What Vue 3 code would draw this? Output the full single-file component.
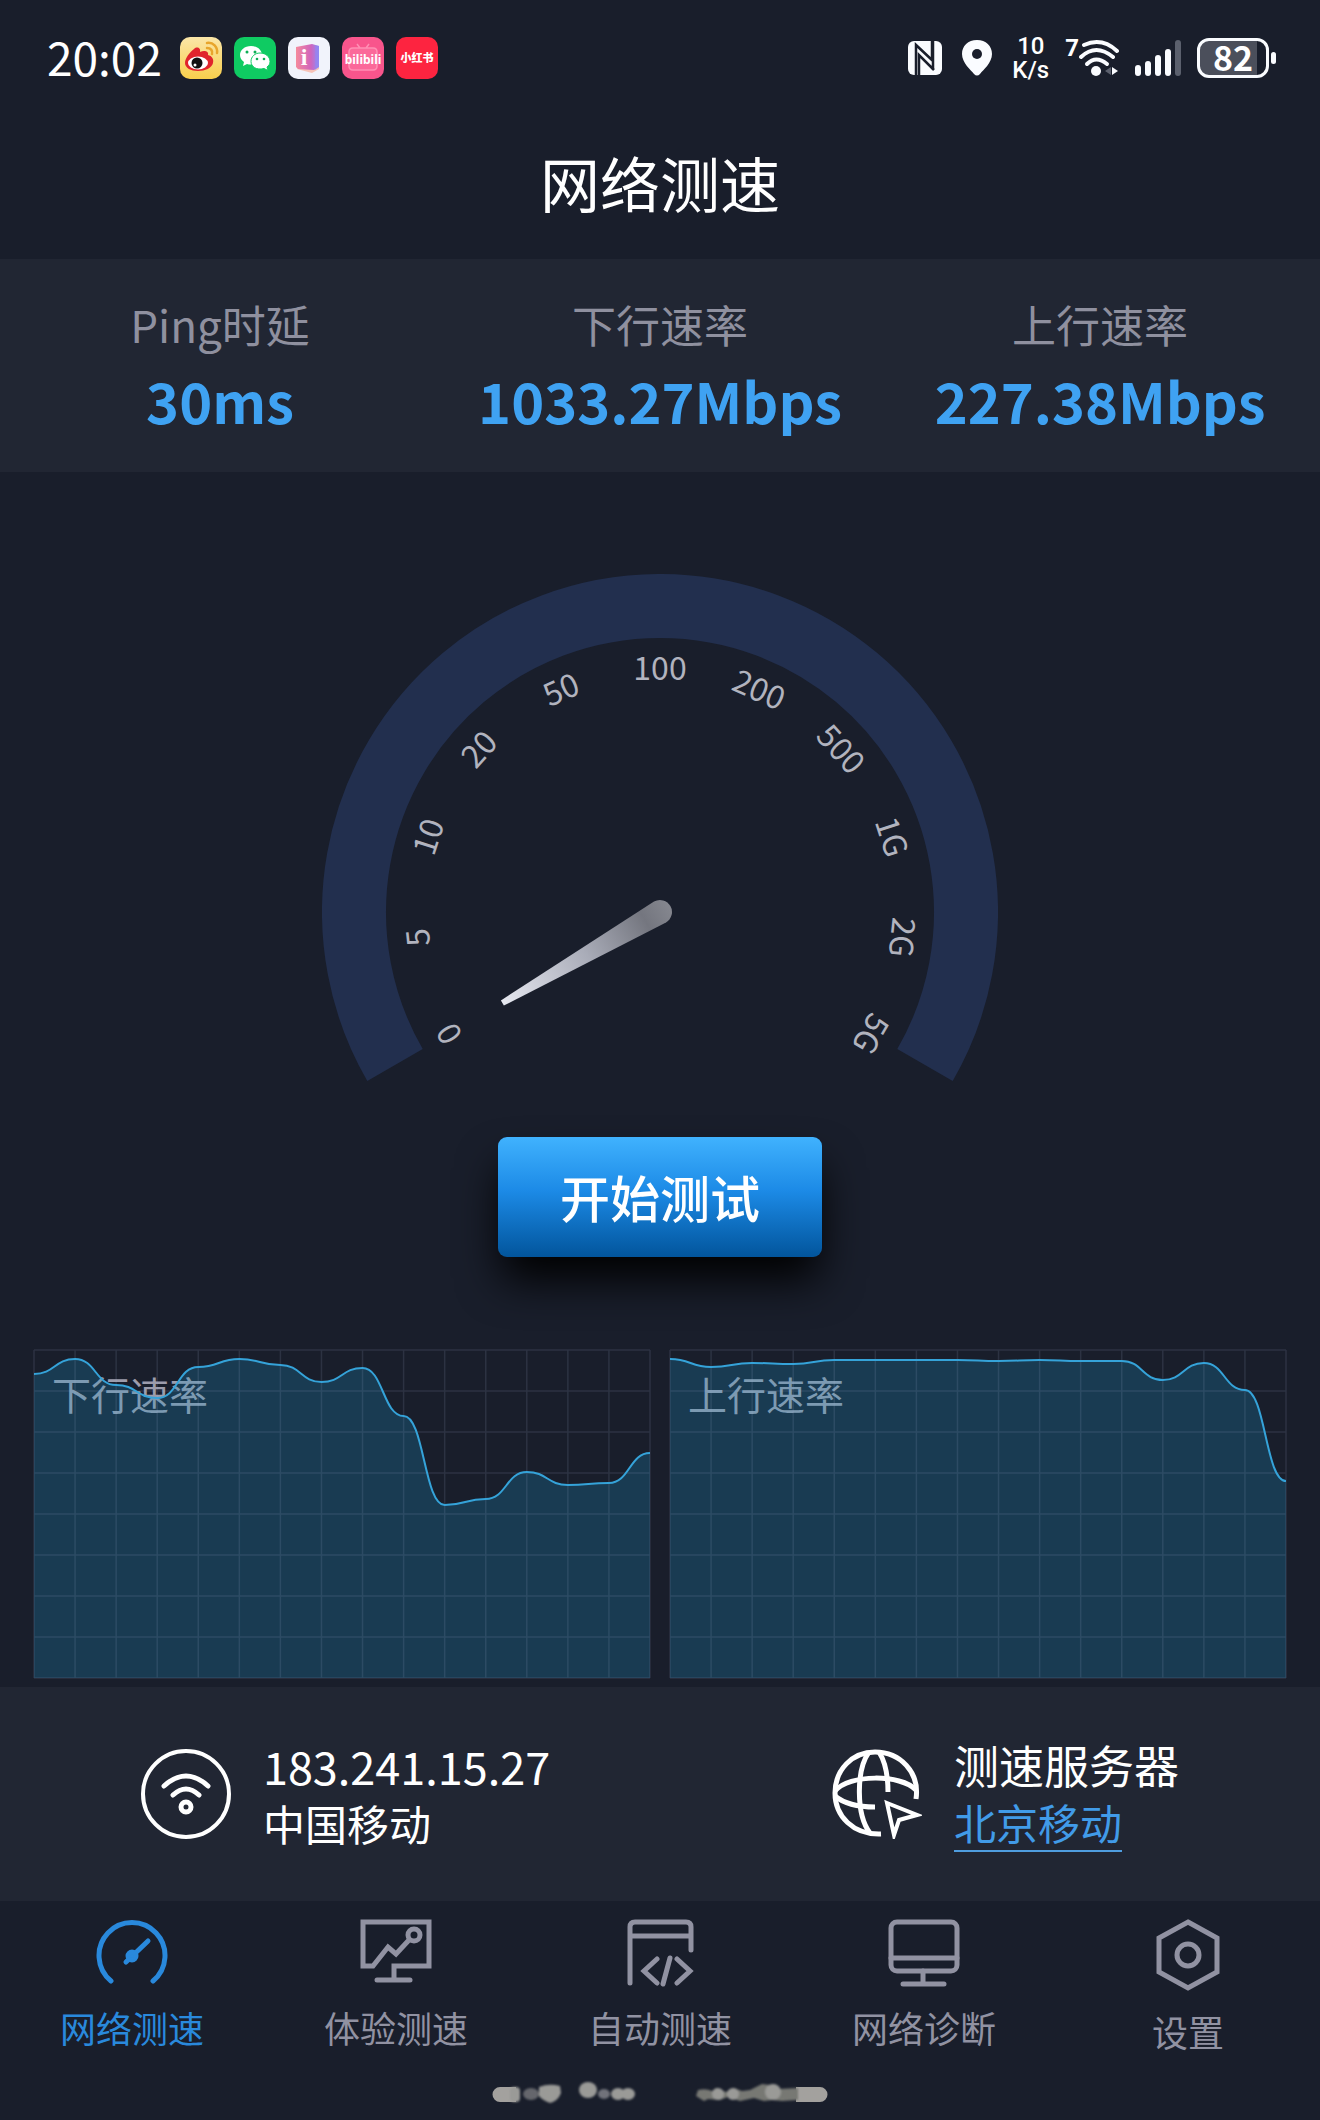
<script setup>
import { ref, computed } from "vue";

const stats = [
  { label: "Ping时延", value: "30ms" },
  { label: "下行速率", value: "1033.27Mbps" },
  { label: "上行速率", value: "227.38Mbps" },
];

// Gauge scale, 24 degrees between two marks
const marks = ["0", "5", "10", "20", "50", "100", "200", "500", "1G", "2G", "5G"];
const markAngle = (index) => index * 24 - 120;

// Chart size in svg units
const chartWidth = 615;
const chartHeight = 328;
const columns = 15;
const rows = 8;

const charts = [
  {
    name: "下行速率",
    points: [24, 9, 35, 48, 17, 9, 15, 32, 18, 66, 155, 149, 122, 135, 133, 103],
  },
  {
    name: "上行速率",
    points: [9, 17, 13, 14, 10, 10, 10, 10, 11, 10, 11, 11, 30, 13, 40, 131],
  },
];

// Smooth line with flat tangents at every point
const linePath = (points) => {
  const step = chartWidth / columns;
  let path = `M0 ${points[0]}`;
  for (let i = 1; i < points.length; i++) {
    const mid = (i - 0.5) * step;
    path += ` C${mid} ${points[i - 1]} ${mid} ${points[i]} ${i * step} ${points[i]}`;
  }
  return path;
};

const areaPath = (points) =>
  `${linePath(points)} V${chartHeight} H0 Z`;

const gridPath = computed(() => {
  let path = "";
  for (let i = 0; i <= columns; i++) {
    path += `M${(i * chartWidth) / columns} 0V${chartHeight}`;
  }
  for (let i = 0; i <= rows; i++) {
    path += `M0 ${(i * chartHeight) / rows}H${chartWidth}`;
  }
  return path;
});

const tabs = [
  { id: "speed", label: "网络测速" },
  { id: "experience", label: "体验测速" },
  { id: "auto", label: "自动测速" },
  { id: "diagnose", label: "网络诊断" },
  { id: "settings", label: "设置" },
];
const activeTab = ref("speed");
</script>

<template>
  <div class="app">
    <!-- Status bar -->
    <div class="status-bar">
      <div class="status-left">
        <span class="clock">20:02</span>
        <!-- weibo -->
        <svg class="app-icon" viewBox="0 0 42 42">
          <defs>
            <linearGradient id="weibo" x1="0" y1="0" x2="0" y2="1">
              <stop offset="0" stop-color="#fbe6a8" />
              <stop offset="1" stop-color="#f8cf4c" />
            </linearGradient>
          </defs>
          <rect width="42" height="42" rx="10" fill="url(#weibo)" />
          <path
            d="M14 12c3-3 7-1 6 3 4-2 9-1 8 3 4 1 6 4 5 8-1 5-8 8-15 8S5 31 5 26c0-5 5-11 9-14z"
            fill="#e0242c"
          />
          <ellipse cx="18" cy="26" rx="10" ry="6.500" fill="#fff" />
          <circle cx="17" cy="26" r="5.500" fill="#111" />
          <circle cx="15" cy="28" r="1.500" fill="#fff" />
          <path
            d="M27 6c6-1 11 4 10 10M27 11c4 0 6 3 5 6"
            fill="none"
            stroke="#e8a52c"
            stroke-width="2.500"
            stroke-linecap="round"
          />
        </svg>
        <!-- wechat -->
        <svg class="app-icon" viewBox="0 0 42 42">
          <rect width="42" height="42" rx="10" fill="#0fcb62" />
          <path
            d="M17 9C10.500 9 6 13 6 18c0 3 1.500 5 4 7l-1 4 4-2c6 2 15-1 15-9 0-5-5-9-11-9z"
            fill="#fff"
          />
          <path
            d="M26 16c6 0 10 4 10 8.500 0 2.500-1 4-3 5.500l1 3.500-4-2c-8 2-13-2-13-7S21 16 26 16z"
            fill="#fff"
            stroke="#0fcb62"
          />
          <g fill="#0fae55">
            <circle cx="13" cy="15" r="1.500" />
            <circle cx="21" cy="15" r="1.500" />
            <circle cx="23" cy="22" r="1.300" />
            <circle cx="30" cy="22" r="1.300" />
          </g>
        </svg>
        <!-- book -->
        <svg class="app-icon" viewBox="0 0 42 42">
          <defs>
            <linearGradient id="book" x1="0" y1="0" x2="1" y2="0">
              <stop offset="0" stop-color="#f58a9c" />
              <stop offset="0.650" stop-color="#d065bd" />
              <stop offset="1" stop-color="#8e8cf6" />
            </linearGradient>
          </defs>
          <rect width="42" height="42" rx="10" fill="#f1f3fb" />
          <path d="M9 32l15 4 7-4V10z" fill="#f7c3b8" />
          <path d="M8 10l16-3 7 2v21l-5 3-16-1-2-2z" fill="url(#book)" />
          <path d="M27 8l4 1v21l-4 3z" fill="#8f86f5" opacity="0.500" />
          <text x="16" y="28" class="book-letter">i</text>
        </svg>
        <!-- bilibili -->
        <svg class="app-icon" viewBox="0 0 42 42">
          <rect width="42" height="42" rx="10" fill="#f8558c" />
          <path
            d="M15 7l3 4M27 7l-3 4M11 11h20q4 0 4 4v14q0 4-4 4H11q-4 0-4-4V15q0-4 4-4z"
            fill="#ff86ae"
            fill-opacity="0.400"
            stroke="#ff8fb4"
            stroke-width="1.500"
          />
          <text x="21" y="27" class="bili-text">bilibili</text>
        </svg>
        <!-- xiaohongshu -->
        <svg class="app-icon" viewBox="0 0 42 42">
          <rect width="42" height="42" rx="10" fill="#fd2440" />
          <text x="21" y="25" class="red-text">小红书</text>
        </svg>
      </div>
      <div class="status-right">
        <!-- nfc -->
        <svg class="nfc" viewBox="0 0 34 34">
          <rect width="34" height="34" rx="6" fill="#fafcff" />
          <path
            d="M8 34V4l16 15V0M25 0v29M11 34V14l15 15"
            fill="none"
            stroke="#191e2b"
            stroke-width="2.500"
          />
        </svg>
        <!-- location -->
        <svg class="pin" viewBox="0 0 30 36">
          <path
            d="M15 0C6 0 0 6 0 14c0 9 9 16 12 20q3 3 6 0c3-4 12-11 12-20C30 6 24 0 15 0z"
            fill="#fafcff"
          />
          <circle cx="15" cy="14" r="5" fill="#191e2b" />
        </svg>
        <div class="net-speed">
          <span>10</span>
          <span>K/s</span>
        </div>
        <div class="wifi">
          <span class="wifi-gen">7</span>
          <svg viewBox="0 0 40 36">
            <g fill="none" stroke="#fafcff" stroke-width="4">
              <path d="M5 5q18-8 33 6" stroke-linecap="round" />
              <path d="M2 17q15-14 32 0" stroke-linecap="round" />
              <path d="M8 24q9-9 20 0" stroke-linecap="round" />
            </g>
            <circle cx="17" cy="31" r="5" fill="#fafcff" />
            <path d="M32 27v8l-6-4z" fill="#5b606d" />
            <path d="M33 27l6 4-6 4z" fill="#fafcff" />
          </svg>
        </div>
        <svg class="signal" viewBox="0 0 46 36">
          <g fill="#fafcff">
            <rect x="0" y="25" width="6" height="11" rx="3" />
            <rect x="10" y="21" width="6" height="15" rx="3" />
            <rect x="20" y="15" width="6" height="21" rx="3" />
            <rect x="30" y="9" width="6" height="27" rx="3" />
          </g>
          <rect x="40" y="0" width="6" height="36" rx="3" fill="#5b606d" />
        </svg>
        <div class="battery">
          <span class="battery-body">82</span>
          <span class="battery-tip"></span>
        </div>
      </div>
    </div>

    <header class="title-bar">
      <h1>网络测速</h1>
    </header>

    <!-- Results -->
    <section class="stats">
      <div v-for="item in stats" :key="item.label" class="stat">
        <span class="stat-label">{{ item.label }}</span>
        <span class="stat-value">{{ item.value }}</span>
      </div>
    </section>

    <!-- Gauge -->
    <main class="content">
      <svg class="gauge" viewBox="0 0 676 510">
        <defs>
          <linearGradient id="needle" x1="0" y1="0" x2="0" y2="1">
            <stop offset="0" stop-color="#e6e8f0" />
            <stop offset="0.500" stop-color="#a9acb8" />
            <stop offset="0.850" stop-color="#74767f" />
            <stop offset="1" stop-color="#85878f" />
          </linearGradient>
        </defs>
        <path
          d="M73 491A306 306 0 1 1 603 491"
          fill="none"
          stroke="#222f4e"
          stroke-width="64"
        />
        <text
          v-for="(mark, index) in marks"
          :key="mark"
          class="mark"
          x="338"
          y="106"
          :transform="`rotate(${markAngle(index)} 338 338)`"
        >
          {{ mark }}
        </text>
        <path
          d="M335 156h6L350 338a12 12 0 0 1-24 0z"
          fill="url(#needle)"
          transform="rotate(-120 338 338)"
        />
      </svg>

      <button type="button" class="start-btn">开始测试</button>

      <div class="charts">
        <div v-for="chart in charts" :key="chart.name" class="chart">
          <span class="chart-label">{{ chart.name }}</span>
          <svg
            class="chart-plot"
            :viewBox="`0 0 ${chartWidth} ${chartHeight}`"
            preserveAspectRatio="none"
          >
            <path :d="areaPath(chart.points)" class="area" />
            <path :d="gridPath" class="grid" />
            <path :d="linePath(chart.points)" class="line" />
          </svg>
        </div>
      </div>
    </main>

    <!-- Network and server -->
    <section class="info">
      <div class="info-item">
        <svg class="info-icon" viewBox="0 0 90 90">
          <g fill="none" stroke="#fff" stroke-width="4" stroke-linecap="round">
            <circle cx="45" cy="45" r="43" />
            <path d="M23 37Q45 17 67 37M32 46Q45 34 58 46" stroke-width="5" />
            <circle cx="45" cy="58" r="5" stroke-width="5" />
          </g>
        </svg>
        <div class="info-text">
          <span class="info-main">183.241.15.27</span>
          <span class="info-sub">中国移动</span>
        </div>
      </div>
      <div class="info-item">
        <svg class="info-icon" viewBox="0 0 90 90">
          <g fill="none" stroke="#fff" stroke-width="5">
            <path d="M84 50C88 23 68 3 43 3 20 3 3 21 3 44s18 42 46 41" />
            <path d="M37 3C24 21 24 66 38 84M47 3Q56 17 56 43" />
            <path d="M3 42C17 25 69 25 84 41M3 47Q16 58 43 58" />
            <path d="M55 54l30 12-18 5-5 15z" stroke-width="4" />
          </g>
        </svg>
        <div class="info-text">
          <span class="info-main">测速服务器</span>
          <a href="#" class="info-sub server-link">北京移动</a>
        </div>
      </div>
    </section>

    <!-- Tabs -->
    <footer class="footer">
      <nav class="tabs">
        <button
          v-for="tab in tabs"
          :key="tab.id"
          type="button"
          class="tab"
          :class="{ active: tab.id === activeTab }"
          @click="activeTab = tab.id"
        >
          <svg v-if="tab.id === 'speed'" class="tab-icon" viewBox="0 0 72 68">
            <path d="M15 62A33 33 0 1 1 57 62" />
            <path d="M30 43L52 22" />
            <circle cx="36" cy="37" r="4" fill="currentColor" />
          </svg>
          <svg
            v-else-if="tab.id === 'experience'"
            class="tab-icon"
            viewBox="0 0 72 68"
          >
            <path d="M34 60V47H69V3H3V47H13L28 28 36 35 49 21" />
            <circle cx="54" cy="16" r="6" />
            <path d="M17 61H50" />
          </svg>
          <svg v-else-if="tab.id === 'auto'" class="tab-icon" viewBox="0 0 72 68">
            <path d="M6 64V8Q6 3 11 3H62Q67 3 67 8V31M6 17H67" />
            <path d="M33 40L20 52 33 64M53 40L66 52 53 64M46 39L39 65" />
          </svg>
          <svg
            v-else-if="tab.id === 'diagnose'"
            class="tab-icon"
            viewBox="0 0 72 68"
          >
            <rect x="3" y="3" width="66" height="49" rx="6" />
            <path d="M3 39H69M35 52V65M15 65H56" />
          </svg>
          <svg v-else class="tab-icon tab-icon-tall" viewBox="0 0 72 72">
            <path d="M36 3L65 19V53L36 69 7 53V19z" />
            <circle cx="36" cy="36" r="11" />
          </svg>
          <span>{{ tab.label }}</span>
        </button>
      </nav>
      <!-- Gesture bar -->
      <svg class="home-bar" viewBox="0 0 336 30">
        <defs>
          <filter id="smudge"><feGaussianBlur stdDeviation="1.200" /></filter>
        </defs>
        <g fill="#a3a19e">
          <path d="M8 8H24V23H8A7.500 7.500 0 0 1 8 8z" />
          <path d="M304 8H328A7.500 7.500 0 0 1 328 23H304z" />
        </g>
        <g filter="url(#smudge)" fill="#9a9a97">
          <rect x="18" y="8" width="10" height="15" rx="4" />
          <ellipse cx="39" cy="15" rx="8" ry="6" fill="#65666c" />
          <path d="M47 8q10-4 21-1l1 7q-3 8-11 10-8-3-11-7z" />
          <ellipse cx="96" cy="11" rx="9" ry="8" />
          <ellipse cx="112" cy="15" rx="6" ry="5" fill="#71727a" />
          <ellipse cx="126" cy="15" rx="7" ry="6" />
          <ellipse cx="136" cy="15" rx="7" ry="6" />
          <path
            d="M206 11q8-2 14 1l4-3 10 4 8-4 8 3 8-1 12-6 8 1 8 4 20-1v12l-16 1-10-1-8 1-10-3-14 3-12-4-8 3-12-1-4 2-8-5z"
            fill="#777873"
          />
          <circle cx="226" cy="15" r="6" />
          <ellipse cx="241" cy="15" rx="6" ry="6" />
          <ellipse cx="281" cy="13" rx="8" ry="8" />
        </g>
      </svg>
    </footer>
  </div>
</template>

<style>
body {
  background: #191e2b;
}
</style>

<style scoped>
.app {
  display: flex;
  flex-direction: column;
  min-height: 100vh;
  background: #191e2b;
  color: #fff;
  font-family: "Noto Sans CJK SC", "Noto Sans", sans-serif;
}

/* Status bar */
.status-bar {
  display: flex;
  justify-content: space-between;
  align-items: center;
  height: 116px;
  padding: 0 44px 0 47px;
}

.status-left {
  display: flex;
  align-items: center;
  gap: 12px;
}

.clock {
  margin-right: 6px;
  padding-bottom: 4px;
  font-size: 46px;
  line-height: 56px;
}

.app-icon {
  width: 42px;
  height: 42px;
}

.book-letter {
  font-family: "Liberation Serif", serif;
  font-size: 24px;
  font-weight: 700;
  text-anchor: middle;
  fill: #fff;
}

.bili-text {
  font-family: "Noto Sans", sans-serif;
  font-size: 12px;
  font-weight: 700;
  text-anchor: middle;
  fill: #fff;
}

.red-text {
  font-size: 11px;
  font-weight: 900;
  text-anchor: middle;
  fill: #fff;
}

.status-right {
  display: flex;
  align-items: center;
  gap: 16px;
}

.nfc {
  width: 34px;
  height: 34px;
  margin-right: 4px;
}

.pin {
  width: 30px;
  height: 36px;
  margin-right: 4px;
}

.net-speed {
  display: flex;
  flex-direction: column;
  align-items: center;
  font-family: Roboto, sans-serif;
  font-size: 24px;
  font-weight: 500;
  line-height: 24px;
}

.wifi {
  display: flex;
  align-items: center;
}

.wifi svg {
  width: 40px;
  height: 36px;
}

.wifi-gen {
  align-self: flex-start;
  font-family: Roboto, sans-serif;
  font-size: 24px;
  font-weight: 700;
  line-height: 16px;
}

.signal {
  width: 46px;
  height: 36px;
}

.battery {
  display: flex;
  align-items: center;
  gap: 2px;
}

.battery-body {
  display: flex;
  align-items: center;
  justify-content: center;
  box-sizing: border-box;
  width: 72px;
  height: 40px;
  padding-bottom: 2px;
  border: 3px solid #fafcff;
  border-radius: 12px;
  background: linear-gradient(to right, #4b4f5b 86%, #191e2b 86%);
  font-size: 34px;
  font-weight: 700;
  line-height: 32px;
}

.battery-tip {
  width: 5px;
  height: 12px;
  border-radius: 3px;
  background: #fafcff;
}

/* Title */
.title-bar {
  height: 143px;
}

.title-bar h1 {
  margin: 0;
  font-size: 60px;
  font-weight: 400;
  line-height: 132px;
  text-align: center;
}

/* Results */
.stats {
  display: grid;
  grid-template-columns: repeat(3, 1fr);
  padding: 29px 0 32px;
  background: #212633;
}

.stat {
  display: flex;
  flex-direction: column;
  align-items: center;
}

.stat-label {
  font-size: 44px;
  line-height: 72px;
  color: #8f909f;
}

.stat-value {
  font-size: 56px;
  font-weight: 700;
  line-height: 80px;
  color: #3fa2f2;
}

/* Gauge */
.content {
  display: flex;
  flex-direction: column;
  align-items: center;
  padding: 102px 34px 9px;
}

.gauge {
  width: 100%;
  max-width: 676px;
}

.mark {
  font-size: 32px;
  fill: #b1b3be;
  text-anchor: middle;
}

.start-btn {
  width: 324px;
  height: 120px;
  margin: 53px 0 93px;
  padding: 0 0 3px;
  border: none;
  border-radius: 9px;
  background: linear-gradient(#40b2fe, #1c8ae6 45%, #02559c);
  box-shadow: 0 26px 44px -4px #000;
  color: #fff;
  font-family: inherit;
  font-size: 50px;
  font-weight: 500;
  cursor: pointer;
}

/* Charts */
.charts {
  display: grid;
  grid-template-columns: 1fr 1fr;
  gap: 20px;
  width: 100%;
}

.chart {
  display: grid;
}

.chart-label,
.chart-plot {
  grid-area: 1 / 1;
}

.chart-label {
  padding: 15px 18px;
  font-size: 39px;
  line-height: 56px;
  color: #9c9cab;
}

.chart-plot {
  width: 100%;
  height: 328px;
  overflow: visible;
}

.area {
  fill: rgba(29, 146, 200, 0.25);
}

.grid {
  fill: none;
  stroke: rgba(160, 180, 210, 0.14);
  stroke-width: 1.5;
}

.line {
  fill: none;
  stroke: #35a3d9;
  stroke-width: 2;
}

/* Network and server */
.info {
  display: flex;
  justify-content: space-around;
  padding: 49px 0;
  background: #212633;
}

.info-item {
  display: flex;
  align-items: center;
  gap: 32px;
}

.info-icon {
  width: 90px;
  height: 90px;
}

.info-text {
  display: flex;
  flex-direction: column;
  align-items: flex-start;
}

.info-main {
  font-size: 45px;
  line-height: 58px;
}

.info-sub {
  font-size: 42px;
  line-height: 56px;
}

.server-link {
  border-bottom: 2px solid #4f9ddf;
  color: #419be8;
  text-decoration: none;
}

/* Tabs */
.footer {
  display: flex;
  flex: 1;
  flex-direction: column;
  align-items: center;
  padding-top: 18px;
}

.tabs {
  display: grid;
  grid-template-columns: repeat(5, 1fr);
  align-items: start;
  width: 100%;
}

.tab {
  display: flex;
  flex-direction: column;
  align-items: center;
  gap: 14px;
  padding: 0;
  border: none;
  background: none;
  color: #9192a2;
  font-family: inherit;
  font-size: 36px;
  line-height: 52px;
  cursor: pointer;
}

.tab.active {
  color: #2989dc;
}

.tab-icon {
  width: 72px;
  height: 68px;
  fill: none;
  stroke: currentColor;
  stroke-width: 5;
  stroke-linecap: round;
}

.tab-icon-tall {
  height: 72px;
}

.home-bar {
  width: 336px;
  height: 30px;
  margin: 22px 0 11px;
}
</style>
